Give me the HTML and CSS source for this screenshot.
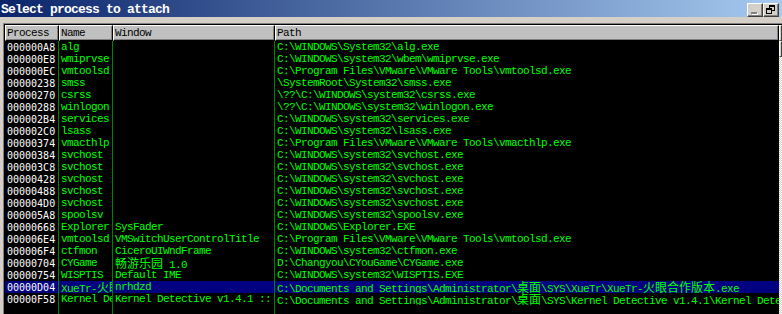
FILE: index.html
```html
<!DOCTYPE html>
<html lang="en">

<head>
    <meta charset="UTF-8">
    <title>Select process to attach</title>
    <link rel="stylesheet" href="styles.css">
</head>

<body>
    <div class="titlebar">
        <div class="title">Select process to attach</div>
        <div class="tbuttons">
            <div class="tbtn">
                <svg width="14" height="12" viewBox="0 0 14 12">
                    <rect x="4" y="9" width="6" height="2" fill="#ffffff" />
                    <rect x="3" y="8" width="6" height="2" fill="#808080" />
                </svg>
            </div>
            <div class="tbtn">
                <svg width="14" height="12" viewBox="0 0 14 12">
                    <rect x="5" y="1" width="6" height="2" fill="#000" />
                    <rect x="10" y="3" width="1" height="4" fill="#000" />
                    <rect x="8" y="6" width="2" height="1" fill="#000" />
                    <rect x="5" y="3" width="1" height="1" fill="#000" />
                    <rect x="2" y="4" width="6" height="2" fill="#000" />
                    <rect x="2" y="6" width="1" height="4" fill="#000" />
                    <rect x="7" y="6" width="1" height="4" fill="#000" />
                    <rect x="2" y="9" width="6" height="1" fill="#000" />
                </svg>
            </div>
        </div>
    </div>

    <div class="client">
        <div class="frame">
            <div class="inner">
                <div class="list">
                    <div class="row head">
                        <div class="hdr">Process</div>
                        <div class="hdr">Name</div>
                        <div class="hdr">Window</div>
                        <div class="hdr">Path</div>
                    </div>
                    <div class="rows">
                        <div class="row"><div class="cell pid">000000A8</div><div class="cell">alg</div><div class="cell"></div><div class="cell">C:\WINDOWS\System32\alg.exe</div></div>
                        <div class="row"><div class="cell pid">000000E8</div><div class="cell">wmiprvse</div><div class="cell"></div><div class="cell">C:\WINDOWS\system32\wbem\wmiprvse.exe</div></div>
                        <div class="row"><div class="cell pid">000000EC</div><div class="cell">vmtoolsd</div><div class="cell"></div><div class="cell">C:\Program Files\VMware\VMware Tools\vmtoolsd.exe</div></div>
                        <div class="row"><div class="cell pid">00000238</div><div class="cell">smss</div><div class="cell"></div><div class="cell">\SystemRoot\System32\smss.exe</div></div>
                        <div class="row"><div class="cell pid">00000270</div><div class="cell">csrss</div><div class="cell"></div><div class="cell">\??\C:\WINDOWS\system32\csrss.exe</div></div>
                        <div class="row"><div class="cell pid">00000288</div><div class="cell">winlogon</div><div class="cell"></div><div class="cell">\??\C:\WINDOWS\system32\winlogon.exe</div></div>
                        <div class="row"><div class="cell pid">000002B4</div><div class="cell">services</div><div class="cell"></div><div class="cell">C:\WINDOWS\system32\services.exe</div></div>
                        <div class="row"><div class="cell pid">000002C0</div><div class="cell">lsass</div><div class="cell"></div><div class="cell">C:\WINDOWS\system32\lsass.exe</div></div>
                        <div class="row"><div class="cell pid">00000374</div><div class="cell">vmacthlp</div><div class="cell"></div><div class="cell">C:\Program Files\VMware\VMware Tools\vmacthlp.exe</div></div>
                        <div class="row"><div class="cell pid">00000384</div><div class="cell">svchost</div><div class="cell"></div><div class="cell">C:\WINDOWS\system32\svchost.exe</div></div>
                        <div class="row"><div class="cell pid">000003C8</div><div class="cell">svchost</div><div class="cell"></div><div class="cell">C:\WINDOWS\system32\svchost.exe</div></div>
                        <div class="row"><div class="cell pid">00000428</div><div class="cell">svchost</div><div class="cell"></div><div class="cell">C:\WINDOWS\system32\svchost.exe</div></div>
                        <div class="row"><div class="cell pid">00000488</div><div class="cell">svchost</div><div class="cell"></div><div class="cell">C:\WINDOWS\system32\svchost.exe</div></div>
                        <div class="row"><div class="cell pid">000004D0</div><div class="cell">svchost</div><div class="cell"></div><div class="cell">C:\WINDOWS\system32\svchost.exe</div></div>
                        <div class="row"><div class="cell pid">000005A8</div><div class="cell">spoolsv</div><div class="cell"></div><div class="cell">C:\WINDOWS\system32\spoolsv.exe</div></div>
                        <div class="row"><div class="cell pid">00000668</div><div class="cell">Explorer</div><div class="cell">SysFader</div><div class="cell">C:\WINDOWS\Explorer.EXE</div></div>
                        <div class="row"><div class="cell pid">000006E4</div><div class="cell">vmtoolsd</div><div class="cell">VMSwitchUserControlTitle</div><div class="cell">C:\Program Files\VMware\VMware Tools\vmtoolsd.exe</div></div>
                        <div class="row"><div class="cell pid">000006F4</div><div class="cell">ctfmon</div><div class="cell">CiceroUIWndFrame</div><div class="cell">C:\WINDOWS\system32\ctfmon.exe</div></div>
                        <div class="row"><div class="cell pid">00000704</div><div class="cell">CYGame</div><div class="cell"><span class="cjk">畅游乐园</span> 1.0</div><div class="cell">D:\Changyou\CYouGame\CYGame.exe</div></div>
                        <div class="row"><div class="cell pid">00000754</div><div class="cell">WISPTIS</div><div class="cell">Default IME</div><div class="cell">C:\WINDOWS\system32\WISPTIS.EXE</div></div>
                        <div class="row sel"><div class="cell pid">00000D04</div><div class="cell">XueTr-<span class="cjk">火眼合作版本</span></div><div class="cell">nrhdzd</div><div class="cell">C:\Documents and Settings\Administrator\<span class="cjk">桌面</span>\SYS\XueTr\XueTr-<span class="cjk">火眼合作版本</span>.exe</div></div>
                        <div class="row"><div class="cell pid">00000F58</div><div class="cell">Kernel Detective</div><div class="cell">Kernel Detective v1.4.1 :: by GamingMasteR</div><div class="cell">C:\Documents and Settings\Administrator\<span class="cjk">桌面</span>\SYS\Kernel Detective v1.4.1\Kernel Detective.exe</div></div>
                        <div class="row filler"><div class="cell"></div><div class="cell"></div><div class="cell"></div><div class="cell"></div></div>
                    </div>
                </div>
                <div class="vscroll">
                    <div class="sbtn"></div>
                    <div class="sbtn"></div>
                    <div class="track"></div>
                </div>
            </div>
        </div>
    </div>
</body>

</html>
```

FILE: styles.css
```css
body {
    margin: 0px;
    padding: 0px;
    width: 782px;
    height: 314px;
    overflow: hidden;
    background-color: #d4d0c8;
}

.titlebar {
    height: 17px;
    display: flex;
    justify-content: space-between;
    align-items: flex-start;
    background: linear-gradient(to right, #0a246a, #a6caf0);
}

.title {
    padding-left: 1px;
    font-family: "Liberation Mono", monospace;
    font-weight: 700;
    font-size: 13px;
    letter-spacing: -0.8px;
    line-height: 19px;
    color: white;
    white-space: nowrap;
}

.tbuttons {
    display: flex;
    gap: 0px;
    padding-top: 3px;
    padding-right: 3px;
}

.tbtn {
    width: 16px;
    height: 14px;
    box-sizing: border-box;
    background-color: #d4d0c8;
    border: 1px solid;
    border-color: #ffffff #404040 #404040 #ffffff;
    box-shadow: inset -1px -1px #808080;
    display: flex;
}

.client {
    padding: 6px 0px 0px 3px;
}

.frame {
    border-top: 1px solid #808080;
    border-left: 1px solid #808080;
}

.inner {
    display: flex;
    height: 290px;
    border-top: 1px solid #000;
    border-left: 1px solid #000;
}

.list {
    width: 774px;
    display: flex;
    flex-direction: column;
    background-color: #000;
}

.row {
    display: grid;
    grid-template-columns: 54px 54px 162px 504px;
}

.hdr {
    height: 16px;
    box-sizing: border-box;
    background-color: #c0c0c0;
    border-top: 1px solid #ffffff;
    border-left: 1px solid #ffffff;
    border-right: 1px solid #000;
    border-bottom: 1px solid #000;
    box-shadow: inset -1px -1px #808080;
    padding-left: 1px;
    font-family: "Liberation Mono", monospace;
    font-size: 11px;
    letter-spacing: -0.6px;
    line-height: 15px;
    color: #000;
    white-space: nowrap;
    overflow: hidden;
}

.rows {
    flex: 1;
    display: flex;
    flex-direction: column;
}

.cell {
    height: 12px;
    box-sizing: border-box;
    padding-left: 2px;
    border-right: 1px solid #008000;
    font-family: "Liberation Mono", monospace;
    font-size: 11px;
    letter-spacing: -0.6px;
    line-height: 13px;
    color: #00ff00;
    white-space: nowrap;
    overflow: hidden;
}

.cell:last-child {
    border-right: none;
}

.pid {
    font-family: "DejaVu Sans Mono", monospace;
    font-size: 10px;
    letter-spacing: 0px;
    color: #ffffff;
}

.cjk {
    font-family: "Noto Sans CJK SC", sans-serif;
    font-size: 12px;
    letter-spacing: 0px;
    line-height: 12px;
}

.sel .cell {
    background-color: #000080;
}

.filler {
    flex: 1;
}

.filler .cell {
    height: auto;
}

.vscroll {
    width: 16px;
    display: flex;
    flex-direction: column;
}

.sbtn {
    height: 16px;
    box-sizing: border-box;
    background-color: #d4d0c8;
    border: 1px solid;
    border-color: #ffffff #404040 #404040 #ffffff;
}

.track {
    flex: 1;
    background-color: #ffffff;
    background-image: repeating-conic-gradient(#d4d0c8 0% 25%, #ffffff 0% 50%);
    background-size: 2px 2px;
}
```
